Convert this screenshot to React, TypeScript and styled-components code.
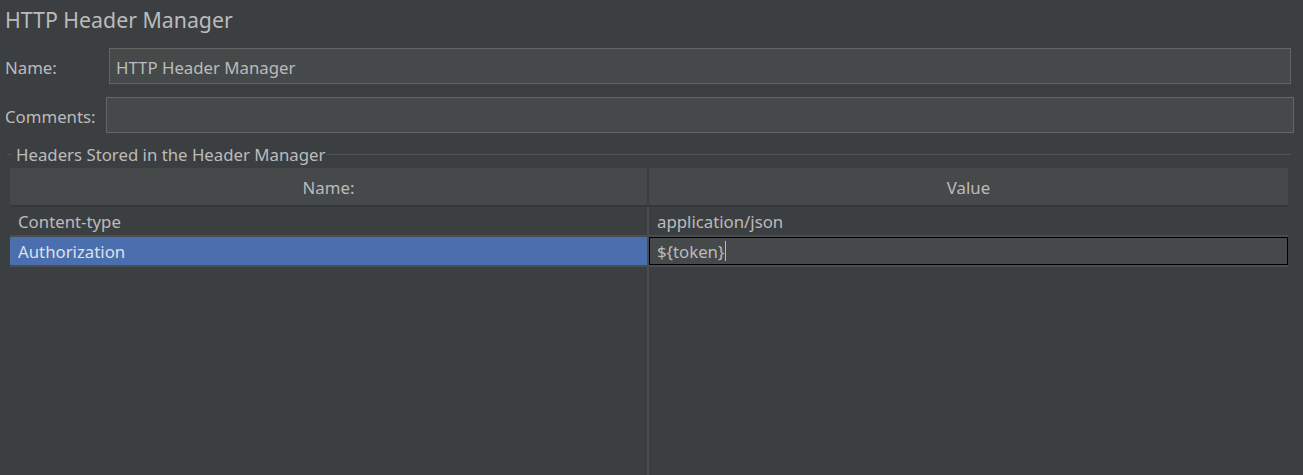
import React from "react";
import styled, { createGlobalStyle } from "styled-components";

const Global = createGlobalStyle`
  html, body {
    margin: 0;
    padding: 0;
    background: #3c3f41;
    height: 100%;
  }
  body {
    font-family: "Noto Sans", "Open Sans", sans-serif;
    font-size: 16.8px;
    color: #bbbbbb;
    overflow: hidden;
  }
  #root { height: 100%; }
`;

const Page = styled.div`
  height: 475px;
  display: flex;
  flex-direction: column;
  background: #3c3f41;
`;

const Title = styled.div`
  height: 42px;
  line-height: 40px;
  padding-left: 5px;
  font-size: 21.3px;
  color: #bbbbbb;
`;

const FieldRow = styled.div<{ $right: number; $top: number }>`
  display: flex;
  align-items: center;
  height: 36px;
  margin-top: ${(p) => p.$top}px;
  padding-left: 5px;
  padding-right: ${(p) => p.$right}px;
`;

const Label = styled.label<{ $width: number }>`
  width: ${(p) => p.$width}px;
  flex: none;
  padding-top: 3px;
`;

const TextField = styled.div`
  flex: 1;
  height: 36px;
  box-sizing: border-box;
  border: 1px solid #646464;
  background: #45494a;
  padding: 3px 0 0 6px;
  display: flex;
  align-items: center;
  color: #bbbbbb;
`;

const Section = styled.div`
  flex: 1;
  display: flex;
  flex-direction: column;
  margin-top: 11px;
  min-height: 0;
`;

const Legend = styled.div`
  display: flex;
  align-items: center;
  height: 20px;
  padding-left: 7px;
  padding-right: 12px;
`;

const LegendLine = styled.div<{ $w?: number }>`
  height: 1px;
  background: #515456;
  ${(p) => (p.$w ? `width: ${p.$w}px; flex: none;` : "flex: 1;")}
`;

const LegendText = styled.span`
  padding: 0 2px 0 4px;
  line-height: 20px;
  margin-top: 1px;
`;

const Table = styled.div`
  flex: 1;
  display: flex;
  flex-direction: column;
  margin: 4px 15px 0 10px;
  min-height: 0;
`;

const HeaderRow = styled.div`
  display: grid;
  grid-template-columns: 637px 1fr;
  column-gap: 2px;
  height: 37px;
  border-bottom: 2px solid #35383a;
  flex: none;
`;

const HeaderCell = styled.div`
  background: #45494a;
  display: flex;
  align-items: center;
  justify-content: center;
  padding-top: 2px;
  box-sizing: border-box;
`;

const Row = styled.div`
  display: grid;
  grid-template-columns: 639px 1fr;
  height: 30px;
  box-sizing: border-box;
  border-bottom: 2px solid #4a4d50;
  flex: none;
`;

const Cell = styled.div<{ $selected?: boolean; $divider?: boolean }>`
  display: flex;
  align-items: center;
  padding: 0 0 0 8px;
  box-sizing: border-box;
  background: ${(p) => (p.$selected ? "#4b6eaf" : "transparent")};
  color: ${(p) => (p.$selected ? "#dde1e6" : "#bbbbbb")};
  border-right: ${(p) => (p.$divider ? "2px solid #4a4d50" : "none")};
`;

const EditorCell = styled.div`
  display: flex;
  align-items: center;
  padding: 0 0 0 7px;
  box-sizing: border-box;
  background: #45494a;
  border: 1px solid #000000;
  color: #bbbbbb;
`;

const Caret = styled.span`
  display: inline-block;
  width: 1px;
  height: 20px;
  background: #bbbbbb;
  margin-left: 1px;
`;

const Filler = styled.div`
  flex: 1;
  display: grid;
  grid-template-columns: 639px 1fr;
`;

const FillerCol = styled.div`
  border-right: 2px solid #4a4d50;
`;

export default function App() {
  return (
    <>
      <Global />
      <Page>
        <Title>HTTP Header Manager</Title>
        <FieldRow $right={12} $top={6}>
          <Label $width={104}>Name:</Label>
          <TextField>HTTP Header Manager</TextField>
        </FieldRow>
        <FieldRow $right={9} $top={13}>
          <Label $width={101}>Comments:</Label>
          <TextField />
        </FieldRow>
        <Section>
          <Legend>
            <LegendLine $w={5} />
            <LegendText>Headers Stored in the Header Manager</LegendText>
            <LegendLine />
          </Legend>
          <Table>
            <HeaderRow>
              <HeaderCell>Name:</HeaderCell>
              <HeaderCell>Value</HeaderCell>
            </HeaderRow>
            <Row>
              <Cell $divider>Content-type</Cell>
              <Cell>application/json</Cell>
            </Row>
            <Row>
              <Cell $divider $selected>Authorization</Cell>
              <EditorCell>
                {"${token}"}
                <Caret />
              </EditorCell>
            </Row>
            <Filler>
              <FillerCol />
              <div />
            </Filler>
          </Table>
        </Section>
      </Page>
    </>
  );
}
